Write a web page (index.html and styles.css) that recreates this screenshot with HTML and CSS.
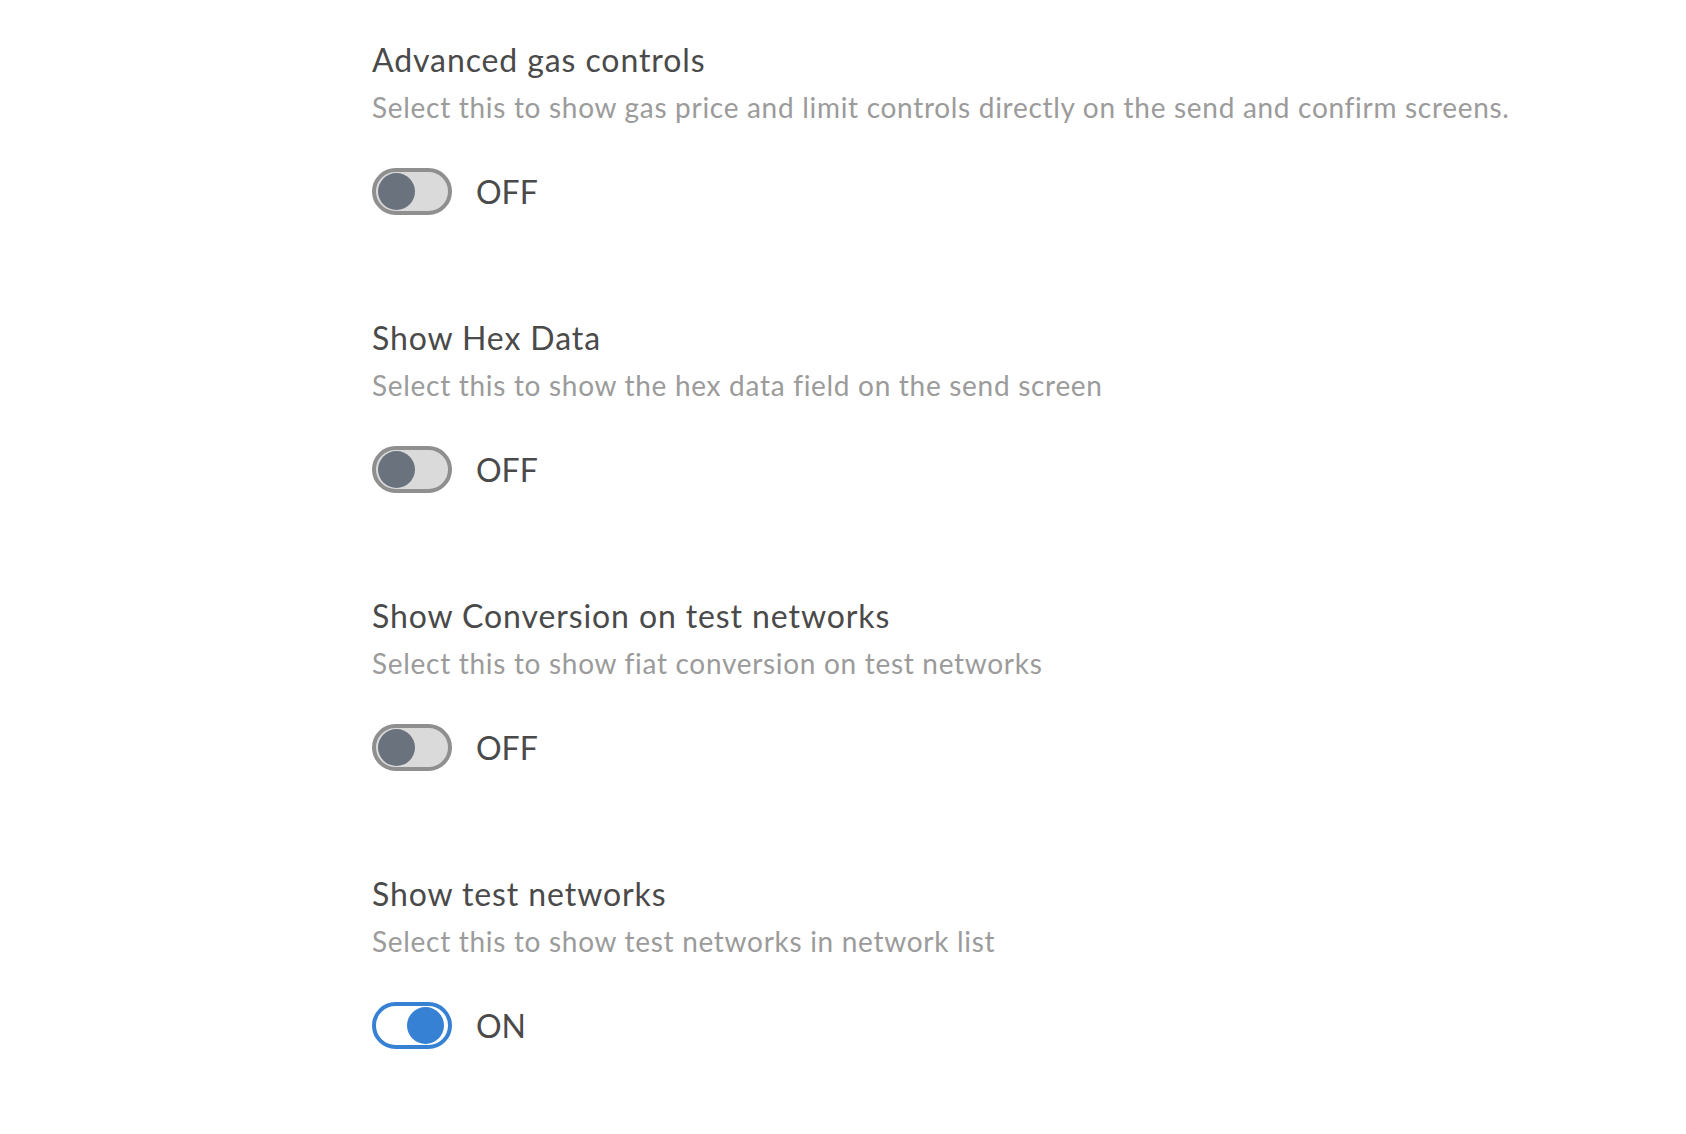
FILE: index.html
```html
<!DOCTYPE html>
<html lang="en">
<head>
<meta charset="utf-8">
<title>Advanced settings</title>
<link rel="stylesheet" href="styles.css">
</head>
<body>
<main class="settings">
  <section class="setting">
    <h2 class="setting-title">Advanced gas controls</h2>
    <p class="setting-desc">Select this to show gas price and limit controls directly on the send and confirm screens.</p>
    <div class="toggle-row">
      <div class="toggle"><span class="knob"></span></div>
      <span class="toggle-label">OFF</span>
    </div>
  </section>
  <section class="setting">
    <h2 class="setting-title">Show Hex Data</h2>
    <p class="setting-desc">Select this to show the hex data field on the send screen</p>
    <div class="toggle-row">
      <div class="toggle"><span class="knob"></span></div>
      <span class="toggle-label">OFF</span>
    </div>
  </section>
  <section class="setting">
    <h2 class="setting-title">Show Conversion on test networks</h2>
    <p class="setting-desc">Select this to show fiat conversion on test networks</p>
    <div class="toggle-row">
      <div class="toggle"><span class="knob"></span></div>
      <span class="toggle-label">OFF</span>
    </div>
  </section>
  <section class="setting">
    <h2 class="setting-title">Show test networks</h2>
    <p class="setting-desc">Select this to show test networks in network list</p>
    <div class="toggle-row">
      <div class="toggle toggle-on"><span class="knob"></span></div>
      <span class="toggle-label">ON</span>
    </div>
  </section>
</main>
</body>
</html>
```

FILE: styles.css
```css
html, body {
  margin: 0;
  padding: 0;
  background: #ffffff;
}

body {
  font-family: "Lato", "Noto Sans", sans-serif;
  font-variant-ligatures: none;
  color: #4d4d4d;
}

.settings {
  display: flex;
  flex-direction: column;
  padding-left: 372px;
}

.setting {
  display: flex;
  flex-direction: column;
  align-items: flex-start;
  padding: 40px 0 63px;
}

.setting-title {
  margin: 0;
  font-size: 32px;
  line-height: 40px;
  font-weight: 400;
  letter-spacing: 0.9px;
  color: #4a4a4a;
}

.setting-desc {
  margin: 9px 0 0;
  font-size: 28px;
  line-height: 36px;
  letter-spacing: 0.7px;
  color: #9b9b9b;
}

.toggle-row {
  display: flex;
  align-items: center;
  margin-top: 43px;
}

.toggle {
  box-sizing: border-box;
  width: 80px;
  height: 47px;
  border: 4px solid #8f8f8f;
  border-radius: 24px;
  background: #dadada;
  display: flex;
  align-items: center;
  justify-content: flex-start;
  padding: 0 2px;
}

.knob {
  width: 37px;
  height: 37px;
  border-radius: 50%;
  background: #6a737d;
}

.toggle-on {
  border-color: #3781d4;
  background: #ffffff;
  justify-content: flex-end;
  padding: 0 4px;
}

.toggle-on .knob {
  background: #3781d4;
}

.toggle-label {
  margin-left: 24px;
  font-size: 32px;
  line-height: 40px;
  color: #4a4a4a;
}
```
